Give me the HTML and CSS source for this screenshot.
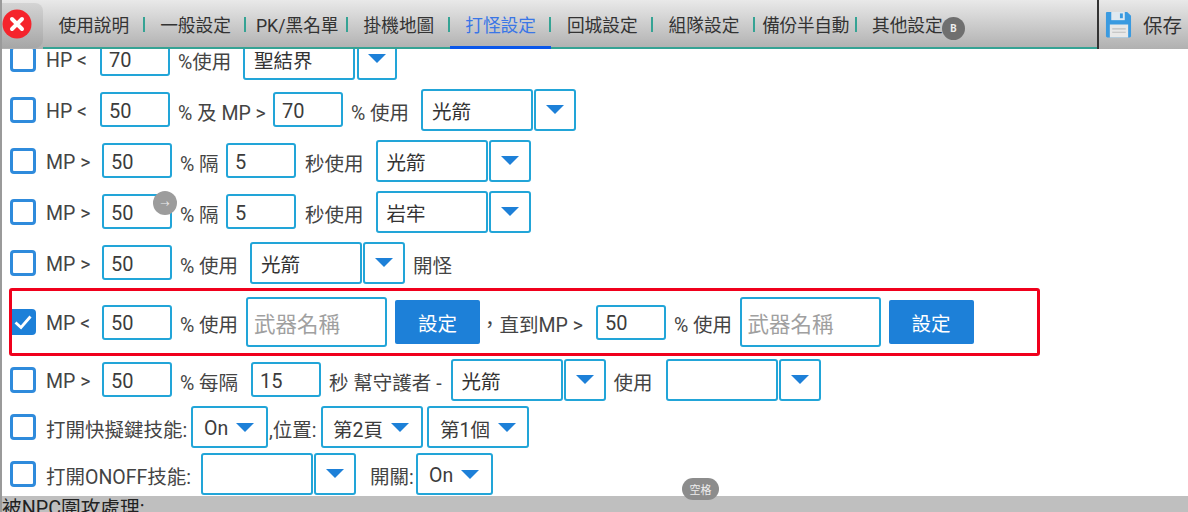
FILE: index.html
```html
<!DOCTYPE html>
<html lang="zh-Hant">
<head>
<meta charset="utf-8">
<title>打怪設定</title>
<link rel="stylesheet" href="styles.css">
</head>
<body>
<div class="page">
  <header class="topbar">
    <div class="close-zone">
      <svg class="close-icon" viewBox="0 0 30 30" width="30" height="30"><circle cx="15" cy="15" r="14.5" fill="#f5242c"/><path d="M10 10l10 10M20 10L10 20" stroke="#fff" stroke-width="4" stroke-linecap="round"/></svg>
    </div>
    <nav class="tabs">
      <a class="tab">使用說明</a>
      <a class="tab">一般設定</a>
      <a class="tab">PK/黑名單</a>
      <a class="tab">掛機地圖</a>
      <a class="tab active">打怪設定</a>
      <a class="tab">回城設定</a>
      <a class="tab">組隊設定</a>
      <a class="tab tight">備份半自動</a>
      <a class="tab last">其他設定</a>
    </nav>
    <div class="tabs-rest"></div>
    <div class="save">
      <svg class="save-icon" viewBox="0 0 28 28" width="27" height="27"><path d="M2 1h21l4 4v21a1.500 1.500 0 0 1-1.500 1.500h-23A1.500 1.500 0 0 1 1 26V2a1 1 0 0 1 1-1z" fill="#3a9ae0"/><rect x="6.500" y="1" width="14" height="8.500" fill="#dfe9f0"/><rect x="15.500" y="2.500" width="3" height="5" fill="#3a9ae0"/><rect x="5" y="14" width="19" height="13.500" fill="#e8e8e8"/><path d="M7.500 18.500h14M7.500 22h14" stroke="#bdbdbd" stroke-width="1.200"/></svg>
      <span>保存</span>
    </div>
  </header>

  <main class="content">
    <div class="row row-first">
      <span class="check"></span><span class="label l-hp">HP &lt;</span>
      <span class="field f-a">70</span><span class="label l-pct">%使用</span>
      <span class="pick">聖結界</span><span class="arrow-box narrow"><i class="tri"></i></span>
    </div>
    <div class="row">
      <span class="check"></span><span class="label l-hp2">HP &lt;</span>
      <span class="field">50</span><span class="label l-and">% 及 MP &gt;</span>
      <span class="field">70</span><span class="label l-use">% 使用</span>
      <span class="pick">光箭</span><span class="arrow-box"><i class="tri"></i></span>
    </div>
    <div class="row">
      <span class="check"></span><span class="label l-mp">MP &gt;</span>
      <span class="field">50</span><span class="label l-gap">% 隔</span>
      <span class="field">5</span><span class="label l-sec">秒使用</span>
      <span class="pick">光箭</span><span class="arrow-box"><i class="tri"></i></span>
    </div>
    <div class="row">
      <span class="check"></span><span class="label l-mp">MP &gt;</span>
      <span class="field">50</span><span class="label l-gap">% 隔</span>
      <span class="field">5</span><span class="label l-sec">秒使用</span>
      <span class="pick">岩牢</span><span class="arrow-box"><i class="tri"></i></span>
    </div>
    <div class="row">
      <span class="check"></span><span class="label l-mp">MP &gt;</span>
      <span class="field">50</span><span class="label l-use2">% 使用</span>
      <span class="pick">光箭</span><span class="arrow-box"><i class="tri"></i></span>
      <span class="label l-after">開怪</span>
    </div>
    <div class="row row-marked">
      <span class="check checked"><svg viewBox="0 0 24 26" width="24" height="26"><path d="M3.500 13.500l5.500 5L18.500 7.500" fill="none" stroke="#fff" stroke-width="2.800"/></svg></span><span class="label l-mp">MP &lt;</span>
      <span class="field">50</span><span class="label l-use2b">% 使用</span>
      <span class="field name">武器名稱</span><button class="btn">設定</button>
      <span class="label l-until">，直到MP &gt;</span>
      <span class="field">50</span><span class="label l-use3">% 使用</span>
      <span class="field name">武器名稱</span><button class="btn">設定</button>
    </div>
    <div class="row row-seven">
      <span class="check"></span><span class="label l-mp">MP &gt;</span>
      <span class="field">50</span><span class="label l-every">% 每隔</span>
      <span class="field">15</span><span class="label l-guard">秒 幫守護者 -</span>
      <span class="pick">光箭</span><span class="arrow-box"><i class="tri"></i></span>
      <span class="label l-then">使用</span>
      <span class="pick"></span><span class="arrow-box"><i class="tri"></i></span>
    </div>
    <div class="row row-eight">
      <span class="check"></span><span class="label l-quick">打開快擬鍵技能:</span>
      <span class="drop d-on">On<i class="tri"></i></span>
      <span class="label l-pos">,位置:</span>
      <span class="drop d-page">第2頁<i class="tri"></i></span>
      <span class="drop d-item">第1個<i class="tri"></i></span>
    </div>
    <div class="row row-nine">
      <span class="check"></span><span class="label l-onoff">打開ONOFF技能:</span>
      <span class="pick"></span><span class="arrow-box"><i class="tri"></i></span>
      <span class="label l-sw">開關:</span>
      <span class="drop d-on">On<i class="tri"></i></span>
    </div>
  </main>

  <footer class="bottom"><span>被NPC圍攻處理:</span></footer>

  <div class="float float-b">B</div>
  <div class="float float-dash">→</div>
  <div class="float float-space">空格</div>
</div>
</body>
</html>
```

FILE: styles.css
```css
* { box-sizing: border-box; }
html, body { margin: 0; padding: 0; }
body {
  font-family: Roboto, "Noto Sans CJK TC", "Noto Sans", sans-serif;
  color: #3c3c3c;
  background: #fff;
}
.page {
  position: relative;
  width: 1188px;
  height: 512px;
  overflow: hidden;
  display: flex;
  flex-direction: column;
  border-left: 2px solid #9a9a9a;
}
.topbar {
  flex: 0 0 49px;
  margin-left: -2px;
  display: flex;
  position: relative;
  z-index: 2;
  background: linear-gradient(#e9e9e9, #b0b0b0);
}
.close-zone {
  width: 43px;
  height: 45px;
  margin-top: 3px;
  border-radius: 0 8px 8px 0;
  background: linear-gradient(#d4d4d4, #a6a6a6);
  padding: 6px 0 0 2px;
  flex: none;
}
.close-icon { display: block; }
.tabs {
  display: grid;
  grid-template-columns: repeat(9, 101.7px);
  border-bottom: 2px solid #35a394;
  flex: none;
}
.tab {
  position: relative;
  display: flex;
  align-items: center;
  justify-content: center;
  height: 47px;
  font-size: 17.7px;
  color: #333;
  white-space: nowrap;
}
.tab::after {
  content: "";
  position: absolute;
  right: 0;
  top: 17px;
  width: 2px;
  height: 15px;
  background: #35a394;
}
.tab.last::after { display: none; }
.tab.tight { letter-spacing: -0.3px; }
.tab.active { color: #3a76e6; }
.tab.active::before {
  content: "";
  position: absolute;
  left: 0;
  right: 0;
  bottom: -2px;
  height: 3px;
  background: #0b57ea;
}
.tabs-rest {
  flex: 1;
  border-bottom: 2px solid #35a394;
}
.save {
  flex: 0 0 91px;
  display: flex;
  align-items: center;
  gap: 11px;
  padding: 0 0 0 6px;
  border-left: 2px solid #333;
  border-radius: 0 0 6px 0;
  font-size: 19.500px;
  color: #333;
}
.save-icon { flex: none; }
.content {
  flex: 0 0 447px;
  overflow: hidden;
  font-size: 19.500px;
}
.row {
  height: 51px;
  display: flex;
  align-items: center;
  padding-left: 8px;
  white-space: nowrap;
}
.row-first { margin-top: -16px; }
.row-marked {
  height: 68px;
  margin: 0 148px 0 7px;
  padding-left: 0;
  border: 3px solid #f0001c;
  border-radius: 3px;
}
.row-seven { height: 47px; }
.row-eight { height: 48px; }
.row-nine { height: 45px; }
.check {
  flex: none;
  width: 26px;
  height: 26px;
  border: 3px solid #2f8bdc;
  border-radius: 4px;
  background: #fff;
}
.check.checked {
  width: 24px;
  border: 0;
  border-radius: 0 4px 4px 0;
  background: #1d80d8;
}
.check svg { display: block; }
.label { flex: none; color: #444; padding-top: 3px; }
.field, .pick, .arrow-box, .drop {
  flex: none;
  border: 2px solid #22a5d8;
  border-radius: 3px;
  background: #fff;
  display: flex;
  align-items: center;
}
.field {
  width: 70px;
  height: 35px;
  padding: 2px 0 0 7px;
  font-size: 20px;
}
.field.f-a { width: 70px; }
.field.name {
  width: 141px;
  height: 50px;
  padding: 0 0 0 6px;
  font-size: 21.500px;
  color: #a0a0a0;
}
.pick {
  width: 112px;
  height: 42px;
  padding: 1px 0 0 9px;
  font-size: 19.500px;
  color: #333;
}
.arrow-box {
  width: 42px;
  height: 42px;
  margin-left: 1px;
  justify-content: center;
}
.arrow-box.narrow { width: 40px; margin-left: 2px; }
.tri {
  display: block;
  width: 0;
  height: 0;
  border-left: 9px solid transparent;
  border-right: 9px solid transparent;
  border-top: 9px solid #1d80d8;
}
.drop {
  height: 42px;
  font-size: 19.500px;
  color: #3c3c3c;
  padding-top: 3px;
}
.drop .tri { margin: -2px 0 0 8px; }
.d-on { width: 77px; padding-left: 11px; }
.d-page { width: 102px; padding-left: 10px; }
.d-item { width: 102px; margin-left: 4px; padding-left: 11px; }
.btn {
  flex: none;
  width: 85px;
  height: 44px;
  margin-left: 8px;
  border: 0;
  border-radius: 2px;
  background: #1d80d8;
  color: #fff;
  font: inherit;
  padding: 0;
}
.l-hp { margin-left: 10px; width: 54px; }
.l-hp2 { margin-left: 10px; width: 54px; }
.l-pct { margin-left: 8px; width: 65px; }
.l-and { margin-left: 8px; width: 95px; }
.l-use { margin-left: 8px; width: 70px; }
.l-mp { margin-left: 10px; width: 56px; }
.l-gap { margin-left: 8px; width: 46px; }
.l-sec { margin-left: 9px; width: 70.500px; }
.l-use2 { margin-left: 8px; width: 70px; }
.l-use2b { margin-left: 8px; width: 66px; }
.l-after { margin-left: 8px; }
.l-until { margin-left: 0; width: 116px; }
.l-use3 { margin-left: 8px; width: 65.500px; }
.l-every { margin-left: 8px; width: 71px; }
.l-guard { margin-left: 8px; width: 121.500px; }
.l-then { margin-left: 8px; width: 52px; }
.l-quick { margin-left: 10px; width: 145px; }
.l-pos { width: 52px; margin-left: 1px; }
.l-onoff { margin-left: 10px; width: 155px; }
.l-sw { margin-left: 14px; width: 46px; }
.bottom {
  flex: 0 0 16px;
  margin-left: -2px;
  background: #bfbfbf;
  font-size: 19.700px;
  line-height: 24px;
  color: #222;
  overflow: hidden;
  padding: 1px 0 0 2px;
}
.float {
  position: absolute;
  z-index: 3;
  display: flex;
  align-items: center;
  justify-content: center;
  color: #eee;
}
.float-b {
  left: 940px;
  top: 17px;
  width: 23px;
  height: 23px;
  border-radius: 50%;
  background: #6f6f6f;
  font-size: 10px;
  font-weight: 700;
}
.float-dash {
  left: 151px;
  top: 191px;
  width: 24px;
  height: 24px;
  border-radius: 50%;
  background: #9c9c9c;
  font-size: 9px;
}
.float-space {
  left: 680px;
  top: 478px;
  width: 37px;
  height: 22px;
  border-radius: 11px;
  background: #8c8c8c;
  font-size: 11px;
}
```
